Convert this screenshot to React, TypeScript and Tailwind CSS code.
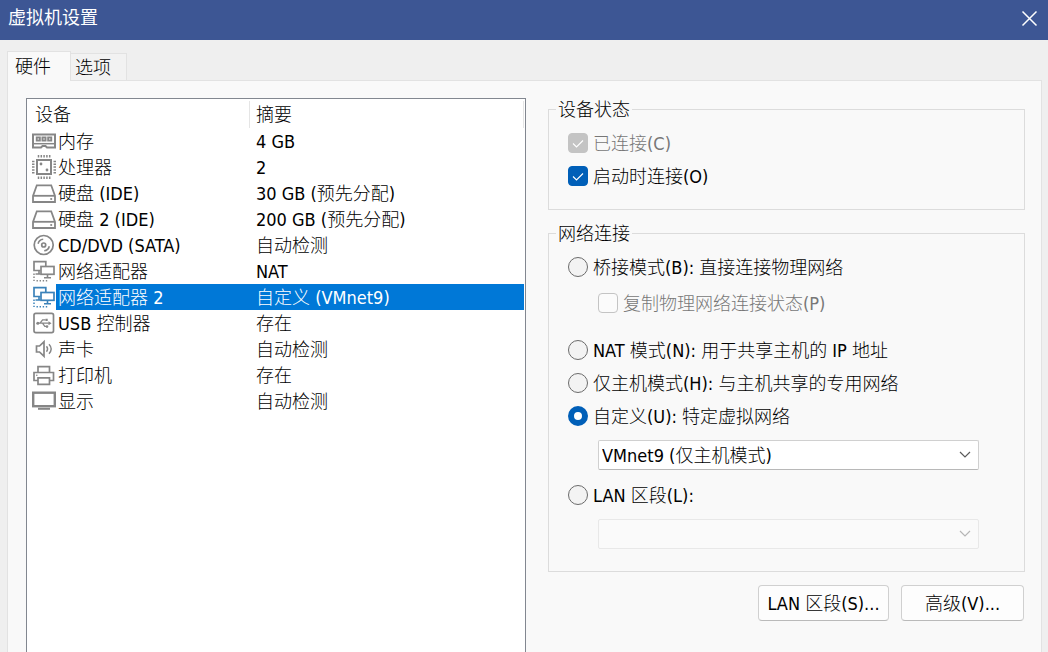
import { useState, type ReactNode } from 'react';
import { clsx } from 'clsx';

type IconName = 'memory' | 'cpu' | 'disk' | 'cd' | 'network' | 'usb' | 'sound' | 'printer' | 'display';

type Device = {
  icon: IconName;
  name: string;
  summary: string;
};

const devices: Device[] = [
  { icon: 'memory', name: '内存', summary: '4 GB' },
  { icon: 'cpu', name: '处理器', summary: '2' },
  { icon: 'disk', name: '硬盘 (IDE)', summary: '30 GB (预先分配)' },
  { icon: 'disk', name: '硬盘 2 (IDE)', summary: '200 GB (预先分配)' },
  { icon: 'cd', name: 'CD/DVD (SATA)', summary: '自动检测' },
  { icon: 'network', name: '网络适配器', summary: 'NAT' },
  { icon: 'network', name: '网络适配器 2', summary: '自定义 (VMnet9)' },
  { icon: 'usb', name: 'USB 控制器', summary: '存在' },
  { icon: 'sound', name: '声卡', summary: '自动检测' },
  { icon: 'printer', name: '打印机', summary: '存在' },
  { icon: 'display', name: '显示', summary: '自动检测' },
];

const icons: Record<IconName, ReactNode> = {
  memory: (
    <>
      <path d="M1 6.500h22v13h-8l-1.500-1.500h-3L9 19.500H1z" strokeWidth="2" />
      <path d="M1 15.700h22" strokeWidth="1.500" />
      <path d="M4.700 9.500h3.200v3H4.700zM10.400 9.500h3.200v3h-3.200zM16.100 9.500h3.200v3h-3.200z" strokeWidth="1.800" />
    </>
  ),
  cpu: (
    <>
      <rect x="5" y="6" width="14" height="14" strokeWidth="2" />
      <path
        d="M6.500 1v2.500M9.300 1v2.500M12.100 1v2.500M14.900 1v2.500M17.700 1v2.500M6.500 22.500V25M9.300 22.500V25M12.100 22.500V25M14.900 22.500V25M17.700 22.500V25M0 7.500h2.500M0 10.300h2.500M0 13.100h2.500M0 15.900h2.500M0 18.700h2.500M21.500 7.500H24M21.500 10.300H24M21.500 13.100H24M21.500 15.900H24M21.500 18.700H24"
        strokeWidth="1.500"
      />
      <circle cx="9" cy="10" r="1.400" fill="currentColor" stroke="none" />
      <circle cx="15" cy="16" r="1.400" fill="currentColor" stroke="none" />
    </>
  ),
  disk: (
    <>
      <path d="M4.800 5.300h14.400L23 16v6H1v-6z" strokeWidth="1.800" />
      <path d="M1 15.800h22" strokeWidth="1.800" />
      <circle cx="19.200" cy="19" r="1.100" fill="currentColor" stroke="none" />
    </>
  ),
  cd: (
    <>
      <circle cx="11.700" cy="13" r="9.500" strokeWidth="1.700" />
      <circle cx="11.700" cy="13" r="2" strokeWidth="1.700" />
      <path d="M11.200 7.200a5.800 5.800 0 0 0-5.100 4.500M12.200 18.800a5.800 5.800 0 0 0 5.100-4.500" strokeWidth="1.600" />
    </>
  ),
  network: (
    <>
      <path d="M8.500 12.500H2V3.700h11.800V8" strokeWidth="1.700" />
      <path d="M7 12.500v3.500M3.500 16h5" strokeWidth="1.600" />
      <rect x="9" y="8.500" width="13" height="7.800" strokeWidth="1.700" />
      <path d="M15.500 16.500v3M12 19.700h7" strokeWidth="1.600" />
      <path d="M2 15.500v8M4.500 22.800h11" strokeWidth="1.500" strokeDasharray="1.400 1.700" />
    </>
  ),
  usb: (
    <>
      <rect x="2" y="3.300" width="19.500" height="19.300" rx="1.800" strokeWidth="1.700" />
      <path d="M5.500 13.200h11.500M8 13.200l2.600-3.400h3M10.500 13.200l2.300 3.200h1.500" strokeWidth="1.300" />
      <path d="M16.500 11.200l3 2-3 2zM13.500 8.700h2.200v2.200h-2.200z" fill="currentColor" stroke="none" />
      <circle cx="5.800" cy="13.200" r="1.500" fill="currentColor" stroke="none" />
      <circle cx="15" cy="16.600" r="1.300" fill="currentColor" stroke="none" />
    </>
  ),
  sound: (
    <>
      <path d="M4.500 10h3L12 5.800v14.400L7.500 16h-3z" strokeWidth="1.700" />
      <path d="M14.500 10.300c1.400 1.700 1.400 3.700 0 5.400M17 8.300c2.800 3 2.800 6.400 0 9.400" strokeWidth="1.400" />
    </>
  ),
  printer: (
    <>
      <path d="M6 10.500V4.700h11.500v5.800" strokeWidth="1.700" />
      <path d="M6 18.500H2v-8h19.500v8h-4" strokeWidth="1.700" />
      <path d="M6 15.800h11.500v6.500H6z" strokeWidth="1.700" />
      <circle cx="4.800" cy="13.300" r=".8" fill="currentColor" stroke="none" />
    </>
  ),
  display: (
    <>
      <rect x="1.200" y="4.700" width="21.600" height="13.500" strokeWidth="2.400" />
      <path d="M6 20.800h12" strokeWidth="2" />
    </>
  ),
};

const uiFont = 'font-["DejaVu_Sans_Condensed","Noto_Sans_CJK_SC",sans-serif]';

function DeviceIcon({ name, active }: { name: IconName; active: boolean }) {
  return (
    <svg
      viewBox="0 0 24 26"
      fill="none"
      stroke="currentColor"
      aria-hidden="true"
      className={clsx('block h-[26px] w-6', active ? 'text-[#3b82b9]' : 'text-[#868686]')}
    >
      {icons[name]}
    </svg>
  );
}

function Checkbox(props: { label: string; checked?: boolean; disabled?: boolean; onChange?: (v: boolean) => void }) {
  const { label, checked = false, disabled, onChange } = props;
  return (
    <label className={clsx('flex h-6 items-center gap-[5px]', disabled && 'text-[#777]')}>
      <span className="relative size-5 shrink-0">
        <input
          type="checkbox"
          checked={checked}
          disabled={disabled}
          onChange={(e) => onChange?.(e.target.checked)}
          className="block size-5 appearance-none rounded border border-[#8a8a8a] bg-[#fbfbfb] checked:border-[#005fb8] checked:bg-[#005fb8] disabled:border-[#c4c4c4] checked:disabled:bg-[#c4c4c4]"
        />
        {checked && (
          <svg viewBox="0 0 20 20" fill="none" stroke="white" className="pointer-events-none absolute inset-0 size-5">
            <path d="M5 10.500l3.500 3.500L15 7.500" strokeWidth="1.100" />
          </svg>
        )}
      </span>
      <span className="pt-[2px]">{label}</span>
    </label>
  );
}

function Radio({ label, checked, onChange }: { label: string; checked: boolean; onChange: () => void }) {
  return (
    <label className="flex h-6 items-center gap-[5px]">
      <input
        type="radio"
        name="connection"
        checked={checked}
        onChange={onChange}
        className="size-5 shrink-0 appearance-none rounded-full border border-[#6b6b6b] bg-[#f3f3f3] checked:border-6 checked:border-[#005fb8] checked:bg-white"
      />
      <span className="pt-[2px]">{label}</span>
    </label>
  );
}

function Dropdown({ label, options, disabled }: { label: string; options: string[]; disabled?: boolean }) {
  return (
    <div className="relative mr-[25px] ml-[30px]">
      <select
        aria-label={label}
        disabled={disabled}
        className="block h-[30px] w-full appearance-none rounded-xs border border-[#d0d0d0] border-b-[#b8b8b8] bg-white pt-[2px] pl-[3px] disabled:border-[#e8e8e8] disabled:bg-[#fafafa] disabled:opacity-100"
      >
        {options.map((o) => (
          <option key={o}>{o}</option>
        ))}
      </select>
      <svg
        viewBox="0 0 12 8"
        fill="none"
        stroke="currentColor"
        className={clsx(
          'pointer-events-none absolute top-[11px] right-2 h-2 w-3',
          disabled ? 'text-[#b5b5b5]' : 'text-[#5a5a5a]',
        )}
      >
        <path d="M1 1l5 5 5-5" strokeWidth="1.200" />
      </svg>
    </div>
  );
}

function Group({ title, className, children }: { title: string; className?: string; children: ReactNode }) {
  return (
    <fieldset className={clsx('min-w-0 border border-[#dcdcdc] pr-5 pl-[19px]', className)}>
      <legend className="-ml-3 h-[23px] px-[2px] leading-6">{title}</legend>
      {children}
    </fieldset>
  );
}

function DeviceList({ selected, onSelect }: { selected: number; onSelect: (i: number) => void }) {
  return (
    <div className="border border-b-0 border-[#828790] bg-white pr-px">
      <table className="w-full table-fixed border-collapse text-left">
        <colgroup>
          <col className="w-[29px]" />
          <col className="w-[193px]" />
          <col />
        </colgroup>
        <thead>
          <tr className="h-[29px]">
            <th colSpan={2} className="p-0 pt-[2px] pl-2 font-light">
              设备
            </th>
            <th className="p-0 pt-[2px] font-light">
              <div className="h-[27px] border-x border-[#e5e5e5] pl-[6px] leading-[27px]">摘要</div>
            </th>
          </tr>
        </thead>
        <tbody>
          {devices.map((d, i) => {
            const active = i === selected;
            return (
              <tr key={i} onClick={() => onSelect(i)} className="h-[26px] cursor-default">
                <td className="p-0 pl-[5px]">
                  <DeviceIcon name={d.icon} active={active} />
                </td>
                <td className={clsx('p-0 pt-[2px] pl-[2px] whitespace-nowrap', active && 'bg-[#0078d7] text-white')}>
                  {d.name}
                </td>
                <td className={clsx('p-0 pt-[2px] pl-[7px] whitespace-nowrap', active && 'bg-[#0078d7] text-white')}>
                  {d.summary}
                </td>
              </tr>
            );
          })}
        </tbody>
      </table>
    </div>
  );
}

export default function App() {
  const [selected, setSelected] = useState(6);
  const [connectAtBoot, setConnectAtBoot] = useState(true);
  const [mode, setMode] = useState('custom');

  return (
    <div className={clsx('flex min-h-screen flex-col bg-[#efefef] text-lg leading-6 font-light text-black', uiFont)}>
      <header className="flex h-10 items-center justify-between bg-[#3d5694] pr-[10px] pb-1 pl-2 text-white">
        <h1 className="font-normal">虚拟机设置</h1>
        <button type="button" aria-label="关闭">
          <svg viewBox="0 0 17 17" fill="none" stroke="currentColor" className="size-[17px]">
            <path d="M1.500 1.500l14 14M15.500 1.500l-14 14" strokeWidth="1.500" />
          </svg>
        </button>
      </header>

      <main className="flex flex-1 flex-col pt-[11px] pr-[6px] pl-[7px]">
        <div role="tablist" className="relative z-10 -mb-px flex items-end">
          <button
            type="button"
            role="tab"
            aria-selected="true"
            className="h-[30px] border border-b-0 border-[#e2e2e2] bg-[#f9f9f9] pr-[19px] pl-[7px]"
          >
            硬件
          </button>
          <button
            type="button"
            role="tab"
            aria-selected="false"
            className="h-7 border border-l-0 border-[#e2e2e2] bg-[#f2f2f2] pt-[2px] pr-[15px] pl-1"
          >
            选项
          </button>
        </div>

        <div className="grid flex-1 grid-cols-[500fr_477fr] gap-[22px] border border-b-0 border-[#e2e2e2] bg-[#f9f9f9] pt-[17px] pr-4 pl-[18px]">
          <DeviceList selected={selected} onSelect={setSelected} />

          <div>
            <Group title="设备状态" className="pt-[10px] pb-[21px]">
              <div className="flex flex-col gap-[9px]">
                <Checkbox label="已连接(C)" checked disabled />
                <Checkbox label="启动时连接(O)" checked={connectAtBoot} onChange={setConnectAtBoot} />
              </div>
            </Group>

            <Group title="网络连接" className="mt-3 pt-[10px] pb-[22px]">
              <div className="flex flex-col gap-3">
                <Radio
                  label="桥接模式(B): 直接连接物理网络"
                  checked={mode === 'bridged'}
                  onChange={() => setMode('bridged')}
                />
                <div className="ml-[30px]">
                  <Checkbox label="复制物理网络连接状态(P)" disabled />
                </div>
                <div className="mt-[11px] flex flex-col gap-[9px]">
                  <Radio
                    label="NAT 模式(N): 用于共享主机的 IP 地址"
                    checked={mode === 'nat'}
                    onChange={() => setMode('nat')}
                  />
                  <Radio
                    label="仅主机模式(H): 与主机共享的专用网络"
                    checked={mode === 'hostonly'}
                    onChange={() => setMode('hostonly')}
                  />
                  <Radio
                    label="自定义(U): 特定虚拟网络"
                    checked={mode === 'custom'}
                    onChange={() => setMode('custom')}
                  />
                </div>
                <Dropdown label="特定虚拟网络" options={['VMnet9 (仅主机模式)']} />
                <div className="mt-px flex flex-col gap-3">
                  <Radio label="LAN 区段(L):" checked={mode === 'lan'} onChange={() => setMode('lan')} />
                  <Dropdown label="LAN 区段" options={[]} disabled />
                </div>
              </div>
            </Group>

            <div className="mt-[13px] flex justify-end gap-3 pr-px">
              <button
                type="button"
                className="h-9 w-[131px] rounded border border-[#d0d0d0] border-b-[#bababa] bg-[#fdfdfd] pt-[2px]"
              >
                LAN 区段(S)...
              </button>
              <button
                type="button"
                className="h-9 w-[123px] rounded border border-[#d0d0d0] border-b-[#bababa] bg-[#fdfdfd] pt-[2px]"
              >
                高级(V)...
              </button>
            </div>
          </div>
        </div>
      </main>
    </div>
  );
}
